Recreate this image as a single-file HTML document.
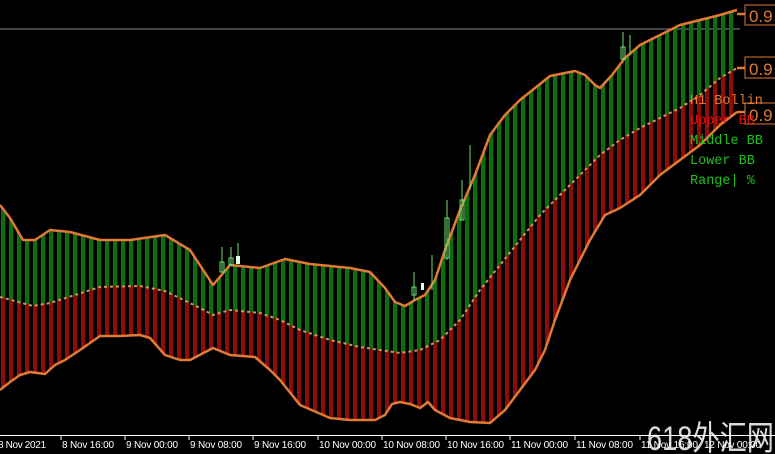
<!DOCTYPE html>
<html><head><style>
body{margin:0;background:#000;width:775px;height:454px;overflow:hidden;font-family:"Liberation Sans",sans-serif}
</style></head><body>
<svg width="775" height="454" xmlns="http://www.w3.org/2000/svg" style="position:absolute;left:0;top:0">
<defs>
<pattern id="g" x="1" y="0" width="8" height="454" patternUnits="userSpaceOnUse"><rect x="0" y="0" width="4.3" height="454" fill="#0b6e12"/></pattern>
<pattern id="r" x="1" y="0" width="8" height="454" patternUnits="userSpaceOnUse"><rect x="0" y="0" width="4.3" height="454" fill="#8a0c0c"/></pattern>
</defs>
<line x1="0" y1="29" x2="740" y2="29" stroke="#8a8a9a" stroke-width="1"/>
<polygon fill="url(#g)" points="0,205 10,218 23,240 35,240 50,230 70,232 100,240 130,240 165,235 190,250 213,285 230,265 260,268 285,259 310,264 350,268 370,272 385,288 395,302 405,306 415,300 425,295 435,280 445,250 460,210 475,175 490,135 505,115 520,100 535,88 550,76 560,74 575,71 585,75 595,85 600,88 612,75 625,58 640,45 660,35 680,25 700,20 720,15 737,10 737,68 720,78 700,95 680,108 660,118 640,128 620,140 600,155 580,175 560,195 540,215 520,240 500,265 480,290 460,320 440,340 420,350 400,353 360,347 330,340 300,330 280,320 260,313 230,310 213,315 200,308 165,291 140,286 100,287 50,303 33,306 0,297"/>
<polygon fill="url(#r)" points="0,297 33,306 50,303 100,287 140,286 165,291 200,308 213,315 230,310 260,313 280,320 300,330 330,340 360,347 400,353 420,350 440,340 460,320 480,290 500,265 520,240 540,215 560,195 580,175 600,155 620,140 640,128 660,118 680,108 700,95 720,78 737,68 737,112 720,125 700,145 680,160 660,175 640,195 620,208 605,215 590,240 570,280 555,320 545,350 535,370 520,390 505,410 490,423 470,422 450,418 435,410 428,402 420,408 410,404 400,402 392,404 385,415 375,420 350,420 330,418 300,405 280,380 270,370 255,357 230,355 213,348 190,360 180,360 165,355 150,338 140,335 120,336 100,336 80,350 65,360 55,365 45,374 30,372 20,375 10,382 0,390"/>
<g fill="none" stroke="#e07a35" stroke-width="2.5" stroke-linejoin="round">
<polyline points="0,205 10,218 23,240 35,240 50,230 70,232 100,240 130,240 165,235 190,250 213,285 230,265 260,268 285,259 310,264 350,268 370,272 385,288 395,302 405,306 415,300 425,295 435,280 445,250 460,210 475,175 490,135 505,115 520,100 535,88 550,76 560,74 575,71 585,75 595,85 600,88 612,75 625,58 640,45 660,35 680,25 700,20 720,15 737,10"/>
<polyline stroke="#d9925a" stroke-width="2" stroke-dasharray="3 3" points="0,297 33,306 50,303 100,287 140,286 165,291 200,308 213,315 230,310 260,313 280,320 300,330 330,340 360,347 400,353 420,350 440,340 460,320 480,290 500,265 520,240 540,215 560,195 580,175 600,155 620,140 640,128 660,118 680,108 700,95 720,78 737,68"/>
<polyline points="0,390 10,382 20,375 30,372 45,374 55,365 65,360 80,350 100,336 120,336 140,335 150,338 165,355 180,360 190,360 213,348 230,355 255,357 270,370 280,380 300,405 330,418 350,420 375,420 385,415 392,404 400,402 410,404 420,408 428,402 435,410 450,418 470,422 490,423 505,410 520,390 535,370 545,350 555,320 570,280 590,240 605,215 620,208 640,195 660,175 680,160 700,145 720,125 737,112"/>
<line x1="737" y1="14" x2="745" y2="14"/><line x1="737" y1="68" x2="745" y2="68"/><line x1="737" y1="112" x2="745" y2="112"/>
</g>
<g fill="none" stroke="#6ee06e" stroke-width="1">
<rect x="220" y="262" width="4" height="10"/><line x1="222" y1="247" x2="222" y2="272"/>
<rect x="229" y="258" width="4" height="7"/><line x1="231" y1="247" x2="231" y2="265"/>
<line x1="238" y1="243" x2="238" y2="258"/>
<rect x="412" y="287" width="4" height="8"/><line x1="414" y1="272" x2="414" y2="300"/>
<rect x="445" y="218" width="4" height="40"/><line x1="447" y1="200" x2="447" y2="260"/>
<rect x="460" y="200" width="4" height="20"/><line x1="462" y1="180" x2="462" y2="220"/>
<line x1="470" y1="145" x2="470" y2="190"/><line x1="432" y1="255" x2="432" y2="290"/>
<rect x="621" y="47" width="4" height="12"/><line x1="623" y1="32" x2="623" y2="60"/>
<line x1="630" y1="35" x2="630" y2="55"/>
</g>
<rect x="421" y="283" width="3" height="7" fill="#dfffdf"/><rect x="236" y="256" width="4" height="8" fill="#dfffdf"/>
<g fill="none" stroke="#e07a35" stroke-width="1"><rect x="745" y="5" width="35" height="20"/><rect x="745" y="57" width="35" height="21"/><rect x="745" y="103" width="35" height="21"/></g>
<g font-family="Liberation Sans,sans-serif" font-size="17" fill="#e07a35"><text x="749" y="22">0.9</text><text x="749" y="75">0.9</text><text x="749" y="121">0.9</text></g>
<g font-family="Liberation Mono,monospace" font-size="13.5"><text x="690" y="104" fill="#e07a35">H1 Bollin</text><text x="690" y="124" fill="#e01010">Upper BB</text><text x="690" y="144" fill="#20c020">Middle BB</text><text x="690" y="164" fill="#20c020">Lower BB</text><text x="690" y="184" fill="#20c020">Range| %</text></g>
<line x1="0" y1="435.5" x2="775" y2="435.5" stroke="#fff" stroke-width="1"/>
<g stroke="#fff"><line x1="61" y1="436" x2="61" y2="440"/><line x1="125" y1="436" x2="125" y2="440"/><line x1="189" y1="436" x2="189" y2="440"/><line x1="253" y1="436" x2="253" y2="440"/><line x1="318" y1="436" x2="318" y2="440"/><line x1="382" y1="436" x2="382" y2="440"/><line x1="446" y1="436" x2="446" y2="440"/><line x1="510" y1="436" x2="510" y2="440"/><line x1="575" y1="436" x2="575" y2="440"/><line x1="640" y1="436" x2="640" y2="440"/><line x1="703" y1="436" x2="703" y2="440"/></g>
<g font-size="10" fill="#fff" font-family="Liberation Sans,sans-serif" lengthAdjust="spacingAndGlyphs"><text x="-2" y="448" textLength="48">8 Nov 2021</text><text x="62" y="448" textLength="52">8 Nov 16:00</text><text x="126" y="448" textLength="52">9 Nov 00:00</text><text x="190" y="448" textLength="52">9 Nov 08:00</text><text x="254" y="448" textLength="52">9 Nov 16:00</text><text x="319" y="448" textLength="57">10 Nov 00:00</text><text x="383" y="448" textLength="57">10 Nov 08:00</text><text x="447" y="448" textLength="57">10 Nov 16:00</text><text x="511" y="448" textLength="57">11 Nov 00:00</text><text x="576" y="448" textLength="57">11 Nov 08:00</text><text x="641" y="448" textLength="57">11 Nov 16:00</text><text x="704" y="448" textLength="57">12 Nov 00:00</text></g>
<text x="647" y="450" font-size="34" fill="#fff" fill-opacity="0.85" font-family="Liberation Sans,Noto Sans CJK SC,sans-serif" textLength="127" lengthAdjust="spacingAndGlyphs">618外汇网</text>
</svg>
</body></html>
